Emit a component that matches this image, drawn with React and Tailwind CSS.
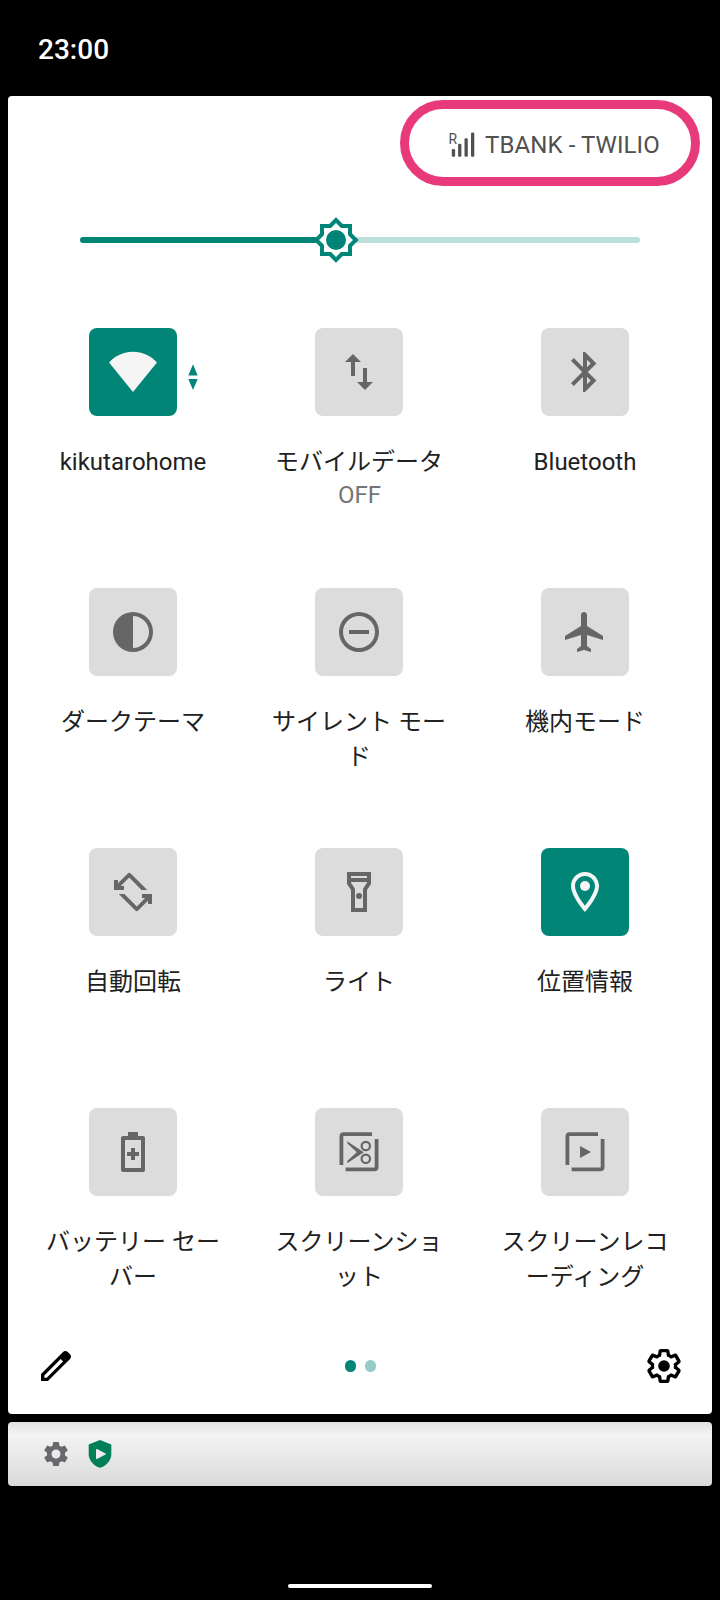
import React from "react";

const SETTINGS_OUTLINE =
  "M13.85 22.25h-3.7c-.74 0-1.36-.54-1.45-1.27l-.27-1.89c-.27-.14-.53-.29-.79-.46l-1.8.72c-.7.26-1.47-.03-1.81-.65L2.2 15.53c-.35-.66-.2-1.44.36-1.88l1.53-1.19c-.01-.15-.02-.3-.02-.46 0-.15.01-.31.02-.46l-1.52-1.19c-.59-.45-.74-1.26-.37-1.88l1.85-3.19c.34-.62 1.11-.9 1.79-.63l1.81.73c.26-.17.52-.32.78-.46l.27-1.91c.09-.7.71-1.25 1.44-1.25h3.7c.74 0 1.36.54 1.45 1.27l.27 1.89c.27.14.53.29.79.46l1.8-.72c.71-.26 1.48.03 1.82.65l1.84 3.18c.36.66.2 1.44-.36 1.88l-1.52 1.19c.01.15.02.3.02.46s-.01.31-.02.46l1.52 1.19c.56.45.72 1.23.37 1.86l-1.86 3.22c-.34.62-1.11.9-1.8.63l-1.8-.72c-.26.17-.52.32-.78.46l-.27 1.91c-.1.68-.72 1.22-1.46 1.22zm-3.23-2h2.76l.37-2.55.53-.22c.44-.18.88-.44 1.34-.78l.45-.34 2.38.96 1.38-2.4-2.03-1.58.07-.56c.03-.26.06-.51.06-.78s-.03-.53-.06-.78l-.07-.56 2.03-1.58-1.39-2.4-2.39.96-.45-.35c-.42-.32-.87-.58-1.33-.77l-.52-.22-.37-2.55h-2.76l-.37 2.55-.53.21c-.44.19-.88.44-1.34.79l-.45.33-2.38-.95-1.39 2.39 2.03 1.58-.07.56a7 7 0 0 0-.06.79c0 .26.02.53.06.78l.07.56-2.03 1.58 1.38 2.4 2.39-.96.45.35c.43.33.86.58 1.33.77l.53.22.38 2.55z";

const SETTINGS_SOLID =
  "M19.14 12.94c.04-.3.06-.61.06-.94 0-.32-.02-.64-.07-.94l2.03-1.58c.18-.14.23-.41.12-.61l-1.92-3.32c-.12-.22-.37-.29-.59-.22l-2.39.96c-.5-.38-1.03-.7-1.62-.94l-.36-2.54c-.04-.24-.24-.41-.48-.41h-3.84c-.24 0-.43.17-.47.41l-.36 2.54c-.59.24-1.13.57-1.62.94l-2.39-.96c-.22-.08-.47 0-.59.22L2.74 8.87c-.12.21-.08.47.12.61l2.03 1.58c-.05.3-.09.63-.09.94s.02.64.07.94l-2.03 1.58c-.18.14-.23.41-.12.61l1.92 3.32c.12.22.37.29.59.22l2.39-.96c.5.38 1.03.7 1.62.94l.36 2.54c.05.24.24.41.48.41h3.84c.24 0 .44-.17.47-.41l.36-2.54c.59-.24 1.13-.56 1.62-.94l2.39.96c.22.08.47 0 .59-.22l1.92-3.32c.12-.22.07-.47-.12-.61l-2.01-1.58zM12 15.6c-1.98 0-3.6-1.62-3.6-3.6s1.62-3.6 3.6-3.6 3.6 1.62 3.6 3.6-1.62 3.6-3.6 3.6z";

const Icon = ({ className = "size-12", children }) => (
  <svg viewBox="0 0 24 24" fill="currentColor" className={className}>
    {children}
  </svg>
);

// Open square shared by the two screen capture tiles
const CaptureFrame = () => (
  <path
    d="M3.2 18.5V4.3Q3.2 3.1 4.4 3.1H18.5M20.8 5.5V19.5Q20.8 20.7 19.6 20.7H5.3"
    fill="none"
    stroke="currentColor"
    strokeWidth="1.9"
  />
);

const rotateArm =
  "M2.5 6h2v1.6L9.4 2.7a1 1 0 0 1 1.42 0L19.15 11H16.3L10.1 4.8 5.9 9H7.5v2h-5z";

const tiles = [
  {
    lines: ["kikutarohome"],
    active: true,
    traffic: true,
    icon: <path d="M12 22L0 7.3C2.9 4 7.2 1.9 12 1.9S21.1 4 24 7.3z" />,
  },
  {
    lines: ["モバイルデータ"],
    status: "OFF",
    icon: (
      <path d="M16 17.01V10h-2v7.01h-3L15 21l4-3.99h-3zM9 3L5 6.99h3V14h2V6.99h3L9 3z" />
    ),
  },
  {
    lines: ["Bluetooth"],
    icon: (
      <path d="M17.71 7.71L12 2h-1v7.59L6.41 5 5 6.41 10.59 12 5 17.59 6.41 19 11 14.41V22h1l5.71-5.71-4.3-4.29 4.3-4.29zM13 5.83l1.88 1.88L13 9.59V5.83zm1.88 10.46L13 18.17v-3.76l1.88 1.88z" />
    ),
  },
  {
    lines: ["ダークテーマ"],
    icon: (
      <path d="M12 2a10 10 0 1 0 0 20 10 10 0 0 0 0-20zm0 2a8 8 0 0 1 0 16z" />
    ),
  },
  {
    lines: ["サイレント モー", "ド"],
    icon: (
      <path d="M12 2a10 10 0 1 0 0 20 10 10 0 0 0 0-20zm0 18a8 8 0 1 1 0-16 8 8 0 0 1 0 16zM7 11v2h10v-2z" />
    ),
  },
  {
    lines: ["機内モード"],
    icon: (
      <path d="M21 16v-2l-8-5V3.5c0-.83-.67-1.5-1.5-1.5S10 2.67 10 3.5V9l-8 5v2l8-2.5V19l-2 1.5V22l3.5-1 3.5 1v-1.5L13 19v-5.5l8 2.5z" />
    ),
  },
  {
    lines: ["自動回転"],
    icon: (
      <>
        <path d={rotateArm} />
        <path d={rotateArm} transform="rotate(180 12 12)" />
      </>
    ),
  },
  {
    lines: ["ライト"],
    icon: (
      <>
        <path d="M6 2v6l2 3v11h8V11l2-3V2H6zm10 2v1H8V4h8zm-2 6.4V20h-4v-9.6L8 7.4V7h8v.4l-2 3z" />
        <circle cx="12" cy="14" r="1.5" />
      </>
    ),
  },
  {
    lines: ["位置情報"],
    active: true,
    icon: (
      <>
        <path d="M12 2C8.13 2 5 5.13 5 9c0 5.25 7 13 7 13s7-7.75 7-13c0-3.87-3.13-7-7-7zM7 9c0-2.76 2.24-5 5-5s5 2.24 5 5c0 2.88-2.88 7.19-5 9.88C9.92 16.21 7 11.85 7 9z" />
        <circle cx="12" cy="9" r="2.5" />
      </>
    ),
  },
  {
    lines: ["バッテリー セー", "バー"],
    icon: (
      <path d="M17 4h-2.5V2h-5v2H7a1 1 0 0 0-1 1v16a1 1 0 0 0 1 1h10a1 1 0 0 0 1-1V5a1 1 0 0 0-1-1zm-1 16H8V6h8zM11 10v2H9v2h2v2h2v-2h2v-2h-2v-2z" />
    ),
  },
  {
    lines: ["スクリーンショ", "ット"],
    icon: (
      <>
        <CaptureFrame />
        <path d="M6.1 6.6L14.4 12.1 6.1 17.6 6.2 16.4 10.9 12.1 6.2 7.8z" />
        <g fill="none" stroke="currentColor" strokeWidth="1.1">
          <circle cx="15.4" cy="9" r="2.1" />
          <circle cx="15.4" cy="15.4" r="2.1" />
        </g>
      </>
    ),
  },
  {
    lines: ["スクリーンレコ", "ーディング"],
    icon: (
      <>
        <CaptureFrame />
        <path d="M9.5 9v6l5.5-3z" />
      </>
    ),
  },
];

const Tile = ({ tile }) => (
  <div className="flex h-[260px] flex-col items-center">
    <div
      className={`relative flex size-[88px] items-center justify-center rounded-lg ${
        tile.active ? "bg-[#008577] text-[#f5f5f5]" : "bg-[#dcdcdc] text-[#666]"
      }`}
    >
      <Icon>{tile.icon}</Icon>
      {tile.traffic && (
        <svg
          viewBox="0 0 10 26"
          className="absolute top-9 left-[99px] h-[26px] w-2.5 fill-[#008577]"
        >
          <path d="M5 .2L9.700 11.500H.3zM.3 15h9.400L5 26z" />
        </svg>
      )}
    </div>
    <div className="mt-[29px] text-center text-2xl leading-[35px] whitespace-nowrap text-[#212121]">
      {tile.lines.map((line) => (
        <div key={line}>{line}</div>
      ))}
      {tile.status && (
        <div className="-mt-0.5 pl-px text-[#757575]">{tile.status}</div>
      )}
    </div>
  </div>
);

const Carrier = () => (
  <div className="mt-1 mr-3 flex h-[86px] w-[300px] items-center self-end rounded-full border-[9px] border-[#e83a7b] pt-[3px] pl-[38px] text-[#505050]">
    <svg viewBox="0 0 30 28" className="h-7 w-[30px] shrink-0" fill="currentColor">
      <text
        x="1.4"
        y="12.5"
        fontSize="14.500"
        fontFamily="Roboto, sans-serif"
        textLength="8.6"
        lengthAdjust="spacingAndGlyphs"
      >
        R
      </text>
      <rect x="4.8" y="18" width="3.3" height="7.7" rx="1.2" />
      <rect x="11.1" y="12.7" width="3.3" height="13" rx="1.2" />
      <rect x="17.5" y="7.2" width="3.3" height="18.5" rx="1.2" />
      <rect x="24" y="1.5" width="3.3" height="24.2" rx="1.2" />
    </svg>
    <span className="ml-2 text-2xl leading-8 tracking-[0.1px] whitespace-nowrap">
      TBANK - TWILIO
    </span>
  </div>
);

const BrightnessSlider = () => (
  <div className="mx-[72px] mt-[30px] flex h-12 items-center">
    <div className="h-1.5 w-[236px] rounded-l-full bg-[#008577]" />
    <Icon className="relative -mx-1 size-12 shrink-0 text-[#008577]">
      <path
        d="M19 9.1V5h-4.1L12 2.1 9.1 5H5v4.1L2.1 12 5 14.9V19h4.1l2.9 2.9 2.9-2.9H19v-4.1l2.9-2.9z"
        fill="#fff"
        stroke="currentColor"
        strokeWidth="2"
      />
      <circle cx="12" cy="12" r="5" />
    </Icon>
    <div className="h-1.5 flex-1 rounded-r-full bg-[#bcdfdb]" />
  </div>
);

const PanelFooter = () => (
  <div className="flex items-center justify-between px-7">
    <Icon className="size-10 text-black">
      <path d="M20.41 4.94l-1.35-1.35c-.78-.78-2.05-.78-2.83 0L3 16.82V21h4.18L20.41 7.77c.79-.78.79-2.05 0-2.83zM6.41 19.06L5 19v-1.36l9.82-9.82 1.41 1.41-9.82 9.83z" />
    </Icon>
    <div className="flex gap-[9px]">
      <div className="h-3 w-[11px] rounded-full bg-[#008577]" />
      <div className="h-3 w-[11px] rounded-full bg-[#93cdc6]" />
    </div>
    <Icon className="size-10 text-black">
      <path d={SETTINGS_OUTLINE} />
      <circle cx="12" cy="12" r="3.5" />
    </Icon>
  </div>
);

const NotificationTray = () => (
  <div className="mx-2 mt-2 flex h-16 items-center rounded bg-linear-to-b from-[#e2e2e2] via-[#f3f3f3] via-20% to-[#dadada] pl-[33px]">
    <Icon className="size-[30px] text-[#68696d]">
      <path d={SETTINGS_SOLID} />
    </Icon>
    <svg viewBox="0 0 24 28" className="ml-[17px] h-7 w-6">
      <path
        d="M12 0l11.3 4.6v9.6c0 6-4.8 11.4-11.3 13.6C5.5 25.6.7 20.2.7 14.2V4.6z"
        fill="#007f58"
      />
      <path
        d="M8.7 9.7v8.6L17.2 14z"
        fill="#eee"
        stroke="#eee"
        strokeWidth="1.4"
        strokeLinejoin="round"
      />
    </svg>
  </div>
);

const App = () => {
  return (
    <div className="flex h-[1600px] w-[720px] flex-col overflow-hidden bg-black font-['Roboto','Noto_Sans_CJK_JP',sans-serif]">
      {/* Status bar */}
      <div className="flex h-24 items-center pt-1 pl-[38px] text-[28px] font-medium text-white">
        23:00
      </div>

      {/* Quick settings */}
      <div className="mx-2 flex h-[1318px] flex-col rounded bg-white">
        <Carrier />
        <BrightnessSlider />
        <div className="mt-16 ml-3 grid grid-cols-[repeat(3,226px)]">
          {tiles.map((tile) => (
            <Tile key={tile.lines[0]} tile={tile} />
          ))}
        </div>
        <div className="-mt-[22px]">
          <PanelFooter />
        </div>
      </div>

      <NotificationTray />

      {/* Gesture bar */}
      <div className="mx-auto mt-auto mb-3 h-1 w-36 rounded-full bg-white" />
    </div>
  );
};

export default App;
